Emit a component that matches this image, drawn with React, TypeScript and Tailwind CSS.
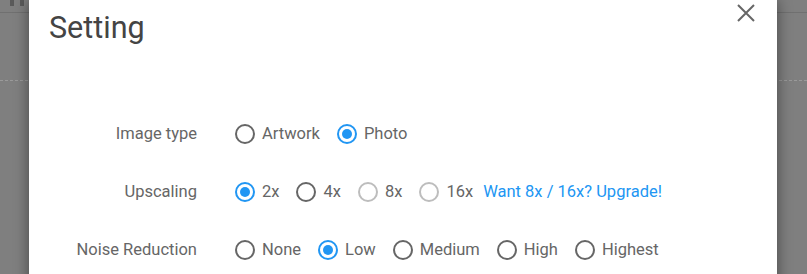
import { ReactNode } from 'react'

type Opt = { label: string; checked?: boolean; disabled?: boolean }

function Radio({ checked, disabled }: { checked?: boolean; disabled?: boolean }) {
  const ring = checked ? 'border-[#2196f3]' : disabled ? 'border-[#bdbdbd]' : 'border-[#666]'
  return (
    <span className={`flex h-[20px] w-[20px] shrink-0 items-center justify-center rounded-full border-2 ${ring}`}>
      {checked && <span className="h-[10px] w-[10px] rounded-full bg-[#2196f3]" />}
    </span>
  )
}

function Row({ label, options, extra }: { label: string; options: Opt[]; extra?: ReactNode }) {
  return (
    <div className="flex h-[58px] items-center">
      <div className="w-[148px] text-right text-[16.5px] text-[#666]">{label}</div>
      <div className="ml-[38px] flex items-center gap-[17px]">
        {options.map((o) => (
          <label key={o.label} className="flex items-center gap-[7px] text-[16.5px] text-[#666]">
            <Radio checked={o.checked} disabled={o.disabled} />
            <span>{o.label}</span>
          </label>
        ))}
        {extra}
      </div>
    </div>
  )
}

export default function App() {
  return (
    <div className="relative h-[274px] w-[807px] overflow-hidden bg-[#7f7f7f] font-['Roboto',sans-serif]">
      {/* page underneath the overlay */}
      <div className="flex gap-[6px] pl-[10px]">
        <span className="h-[6px] w-[4px] bg-[#5a5a5a]" />
        <span className="h-[6px] w-[4px] bg-[#5a5a5a]" />
      </div>
      <div className="mt-[6px] h-[1px] w-full bg-[#707070]" />
      <div className="mt-[67px] w-full border-t border-dashed border-[#9a9a9a]" />

      <div className="absolute left-[29px] top-0 h-[300px] w-[748px] bg-white shadow-[0_0_14px_rgba(0,0,0,0.45)]">
        <h2 className="ml-[20px] mt-[13px] text-[30.5px] leading-[30px] text-[#444]">Setting</h2>
        <button className="absolute left-[708px] top-[4px]">
          <svg width="18" height="18" viewBox="0 0 18 18" className="block">
            <path d="M1 1 L17 17 M17 1 L1 17" stroke="#666" strokeWidth="2" />
          </svg>
        </button>

        <div className="mt-[62px] pl-[20px]">
          <Row label="Image type" options={[{ label: 'Artwork' }, { label: 'Photo', checked: true }]} />
          <Row
            label="Upscaling"
            options={[
              { label: '2x', checked: true },
              { label: '4x' },
              { label: '8x', disabled: true },
              { label: '16x', disabled: true },
            ]}
            extra={<a className="-ml-[7px] text-[16.5px] text-[#2196f3]">Want 8x / 16x? Upgrade!</a>}
          />
          <Row
            label="Noise Reduction"
            options={[
              { label: 'None' },
              { label: 'Low', checked: true },
              { label: 'Medium' },
              { label: 'High' },
              { label: 'Highest' },
            ]}
          />
        </div>
      </div>
    </div>
  )
}
